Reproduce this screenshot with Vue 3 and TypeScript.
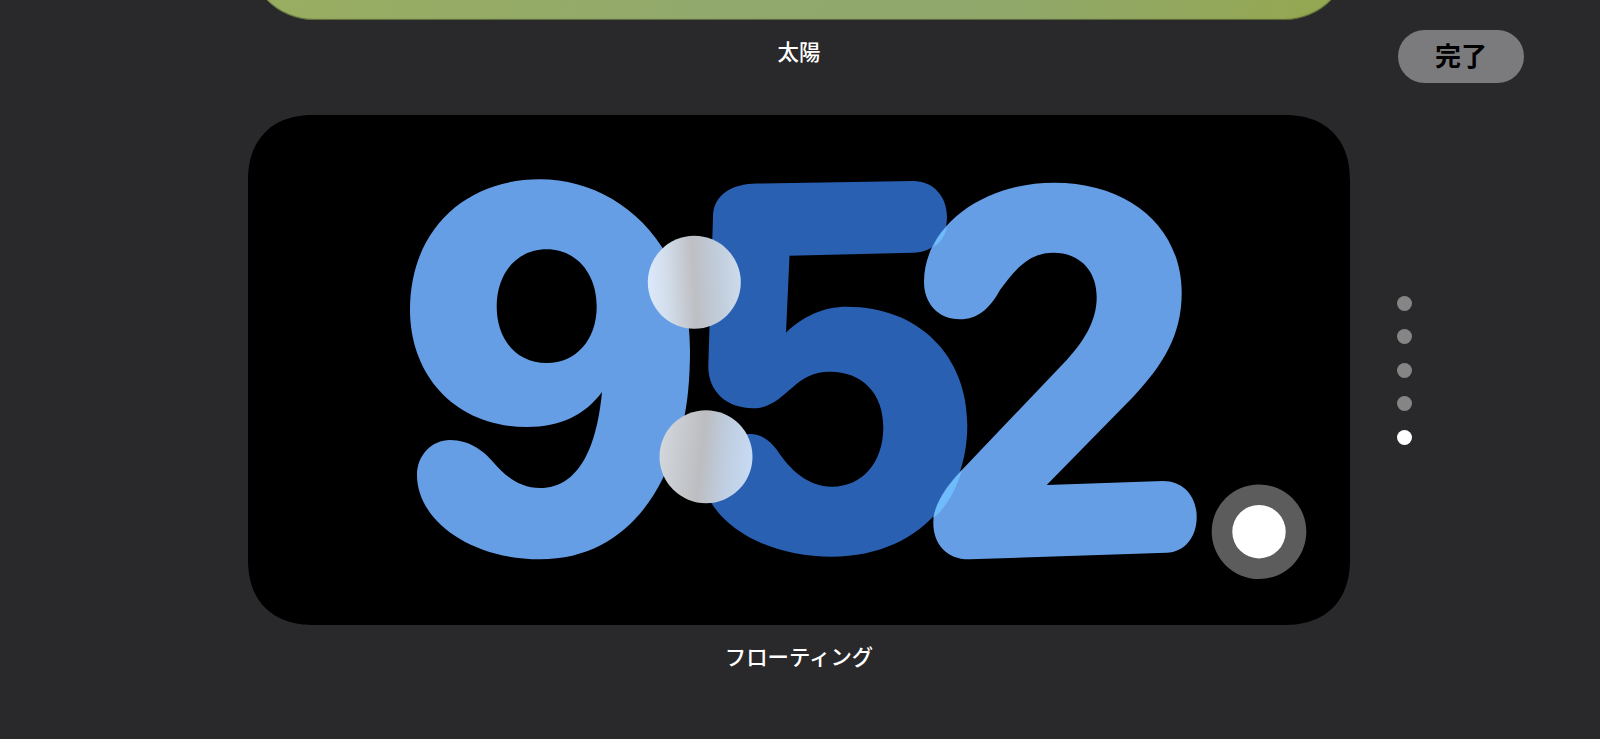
<script setup lang="ts">
const dots: boolean[] = [false, false, false, false, true]
const nine = 'M540 179.3C615 179.3 690 240 690 350C690 410 680 445 663 478C640 525 600 559.3 540 559.3C470 559.3 417 520 417 475C417 455 432 440 450 440C470 440 485 452 493 462C505 476 520 488 540 488C580 488 597 445 602 392C585 415 560 427 527 427C455 427 410 375 410 310C410 230 465 179.3 540 179.3ZM546.7 249.3C517 249.3 496.7 273 496.7 306.5C496.7 340 517 363 546.7 363C576 363 596.7 340 596.7 306.5C596.7 273 576 249.3 546.7 249.3Z'
const five = 'M757 183.5L913 181C933 181 947 196 947 217C947 238 933 252.7 913 252.7L789.5 255.7L786 332.7C802 317 823 306.7 847 306.7C918 306.7 967.3 355 967.3 425C967.3 505 910 556.7 832 556.7C775 556.7 725 533 707 495C700 470 720 434 750 434C762 434 770 441 777 450C790 470 808 486.7 832 486.7C862 486.7 883.3 463 883.3 427C883.3 393 862 371.7 830 371.7C812 371.7 802 379 793 387C780 398 770 408.3 753 408.3C725 408.3 708 390 708.3 366L713 217C713 195 732 183.5 757 183.5Z'
const two = 'M1054 182.7C1130 182.7 1181.7 228 1181.7 293C1181.7 335 1163 365 1133 397L1046.7 485L1163 481C1184 481 1196.7 497 1196.7 516.7C1196.7 538 1184 552 1166.7 552.7L970 559.3C948 560 933.3 545 933.3 523C933.3 505 945 488 960 472L1066.7 360C1085 340 1096.7 320 1096.7 297C1096.7 270 1079 252.7 1053.3 252.7C1030 252.7 1016 268 1000 290C990 308 978 319.3 960 319.3C938 319.3 924 303 924 282C924 225 985 182.7 1054 182.7Z'
const lensLow = 'M962 470C947 486 936 503 933.3 518C946 508 956 490 962 470Z'
const lensHigh = 'M947 227C941 232 936 239 933.5 247C940 243 945 236 947 227Z'
</script>

<template>
  <div class="screen">
    <main class="gallery">
      <div class="sun-card"></div>
      <p class="caption first">太陽</p>
      <section class="clock-card">
        <svg class="clock" viewBox="248 115 1102 510" aria-label="9:52">
          <defs>
            <linearGradient id="dotA" x1="0" y1="0.55" x2="1" y2="0.5">
              <stop offset="0" stop-color="#dce9fb" />
              <stop offset="0.2" stop-color="#d3deec" />
              <stop offset="0.5" stop-color="#bebfc3" />
              <stop offset="0.75" stop-color="#c0ccda" />
              <stop offset="1" stop-color="#ccdbec" />
            </linearGradient>
            <linearGradient id="dotB" x1="0" y1="0.45" x2="1" y2="0.55">
              <stop offset="0" stop-color="#d2d7dc" />
              <stop offset="0.45" stop-color="#bcbdc0" />
              <stop offset="0.7" stop-color="#bfcddf" />
              <stop offset="1" stop-color="#c7dbf4" />
            </linearGradient>
          </defs>
          <path :d="nine" fill="#659ee5" fill-rule="evenodd" />
          <path :d="five" fill="#2a60b2" />
          <path :d="two" fill="#659ee5" />
          <path :d="lensLow" fill="#6ebcfb" />
          <path :d="lensHigh" fill="#6ebcfb" />
          <circle cx="694.3" cy="282.3" r="46.5" fill="url(#dotA)" />
          <circle cx="706" cy="456.7" r="46.5" fill="url(#dotB)" />
          <circle cx="1259" cy="531.7" r="47.3" fill="#5c5c5c" />
          <circle cx="1259" cy="531.7" r="26.7" fill="#ffffff" />
        </svg>
      </section>
      <p class="caption second">フローティング</p>
    </main>
    <aside class="rail">
      <button class="done" type="button">完了</button>
      <div class="pager">
        <span v-for="(active, i) in dots" :key="i" class="dot" :class="{ active }"></span>
      </div>
    </aside>
  </div>
</template>

<style>
html, body { margin: 0; background: #29292b; }
</style>

<style scoped>
.screen {
  width: 1600px;
  height: 739px;
  overflow: hidden;
  display: grid;
  grid-template-columns: 248px 1102px 1fr;
  background: #29292b;
  font-family: "Noto Sans CJK JP", "Liberation Sans", sans-serif;
}
.gallery {
  grid-column: 2;
  display: flex;
  flex-direction: column;
}
.sun-card {
  height: 160px;
  margin-top: -140px;
  flex: none;
  border-radius: 66px;
  background: linear-gradient(100deg, #99ae5f 0%, #91a96d 45%, #90a86a 70%, #94a74f 100%);
  box-shadow: inset 0 -1px 1px rgba(40, 45, 20, 0.55);
}
.caption {
  margin: 0;
  text-align: center;
  color: #ffffff;
  font-size: 21.4px;
  font-weight: 500;
  line-height: 24px;
}
.caption.first { margin-top: 19px; margin-bottom: 52px; }
.caption.second { margin-top: 19px; }
.clock-card {
  height: 510px;
  flex: none;
  border-radius: 66px;
  corner-shape: superellipse(1.2);
  background: #000000;
  overflow: hidden;
}
.clock {
  display: block;
  width: 100%;
  height: 100%;
}
.rail {
  grid-column: 3;
  display: flex;
  flex-direction: column;
  align-items: flex-start;
  padding: 30px 0 0 48px;
}
.done {
  width: 126px;
  height: 53px;
  padding: 0 0 3px;
  border: none;
  border-radius: 26.5px;
  background: #7b7b7d;
  color: #000000;
  font-family: inherit;
  font-size: 26px;
  font-weight: 700;
  line-height: 50px;
}
.pager {
  display: flex;
  flex-direction: column;
  gap: 18.6px;
  margin: 212.5px 0 0 -1.5px;
}
.dot {
  width: 15px;
  height: 15px;
  border-radius: 50%;
  background: #858585;
}
.dot.active { background: #ffffff; }
</style>
